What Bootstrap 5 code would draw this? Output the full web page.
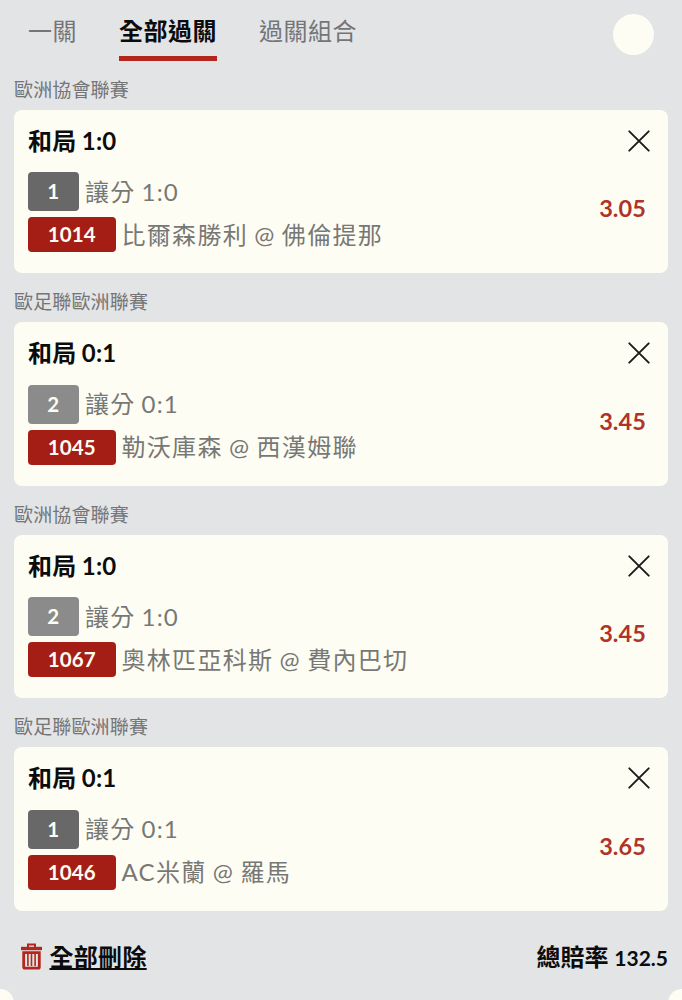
<!DOCTYPE html>
<html lang="zh-Hant">
<head>
    <meta charset="UTF-8">
    <meta name="viewport" content="width=device-width, initial-scale=1.0">
    <title>全部過關</title>

    <!-- Bootstrap CSS -->
    <link rel="stylesheet" href="https://cdn.jsdelivr.net/npm/bootstrap@5.3.0/dist/css/bootstrap.min.css">

    <style>
        body {
            background: #e3e4e6;
            color: #0c0c0c;
            font-family: Lato, "Noto Sans CJK TC", sans-serif;
            font-size: 24px;
            height: 1000px;
            overflow: hidden;
        }
        .bet-tabs { height: 60.5px; gap: 42px; padding-left: 28px; }
        .bet-tabs .nav-link {
            height: 61px;
            padding: 11px 0 0;
            line-height: 40px;
            letter-spacing: .5px;
            color: #747577;
            border-bottom: 5px solid transparent;
        }
        .bet-tabs .nav-link.active { color: #0c0c0c; font-weight: 700; border-bottom-color: #b3261e; }
        .round-btn { width: 41px; height: 41px; margin: 13.5px 28.5px 0 0; background: #fefdf3; }
        .league { height: 49px; padding-top: 8px; line-height: 42px; font-size: 19px; letter-spacing: .15px; color: #747577; }
        .bet-card { height: 163.5px; border-radius: 8px; background: #fefdf3; padding: 0 18px 0 14px; }
        .bet-title { height: 62.5px; line-height: 62px; font-weight: 700; letter-spacing: .2px; word-spacing: -.6px; }
        .bet-lines { gap: 6px; }
        .bet-row { height: 39px; gap: 6.5px; color: #777875; letter-spacing: 1.2px; word-spacing: -1.2px; white-space: pre; }
        .bet-row + .bet-row { height: 35px; gap: 6px; letter-spacing: 1.3px; }
        .bet-row .tag {
            border-radius: 4px;
            color: #fefdf3;
            font-size: 20.5px;
            font-weight: 700;
            letter-spacing: .1px;
            text-align: center;
        }
        .tag-pick { width: 50.5px; height: 39px; line-height: 39px; background: #686868; }
        .tag-pick.second { background: #8b8b8b; }
        .tag-code { width: 87.5px; height: 35px; line-height: 35px; background: #a51e16; }
        .odds { font-weight: 700; font-size: 23.5px; letter-spacing: .1px; color: #b0332a; padding-top: 19px; }
        .bet-footer { height: 90px; padding: 2px 14px 0 20px; font-weight: 700; }
        .bet-footer a { margin-left: 6.5px; color: #0c0c0c; letter-spacing: .3px; text-decoration-thickness: 2px; text-underline-offset: 2px; text-decoration-skip-ink: none; }
        #totalOdds { font-size: 21px; }
        .notch { position: absolute; top: 989px; width: 28px; height: 28px; border-radius: 50%; background: #fefdf3; }
        .notch-left { left: -14px; }
        .notch-right { right: -14px; }
    </style>
</head>
<body class="position-relative">

    <!-- Tabs -->
    <div class="d-flex justify-content-between align-items-start">
        <ul class="nav bet-tabs">
            <li><a class="nav-link" href="#">一關</a></li>
            <li><a class="nav-link active" href="#">全部過關</a></li>
            <li><a class="nav-link" href="#">過關組合</a></li>
        </ul>
        <button class="btn round-btn rounded-circle border-0 p-0" aria-label="選單"></button>
    </div>

    <!-- Selections -->
    <main id="betList"></main>

    <!-- Footer -->
    <footer class="bet-footer d-flex justify-content-between align-items-center">
        <div class="d-flex align-items-center">
            <svg width="23" height="27" viewBox="0 0 23 27" fill="none" stroke="#b3261e">
                <path d="M8 4V1.5h7V4" stroke-width="2"/>
                <path d="M1 5.5h21" stroke-width="3.4"/>
                <path d="M3.7 9.7h15.6V24q0 1.2-1.2 1.2H4.9q-1.2 0-1.2-1.2z" stroke-width="2.8"/>
                <path d="M7.9 11v12M11.5 11v12M15.1 11v12" stroke-width="1.6"/>
            </svg>
            <a href="#" id="removeAll">全部刪除</a>
        </div>
        <div>總賠率 <span id="totalOdds">132.5</span></div>
    </footer>

    <span class="notch notch-left"></span>
    <span class="notch notch-right"></span>

    <script>
        const bets = [
            { league: "歐洲協會聯賽", score: "1:0", pick: 1, code: 1014, teams: "比爾森勝利 @ 佛倫提那", odds: 3.05 },
            { league: "歐足聯歐洲聯賽", score: "0:1", pick: 2, code: 1045, teams: "勒沃庫森 @ 西漢姆聯", odds: 3.45 },
            { league: "歐洲協會聯賽", score: "1:0", pick: 2, code: 1067, teams: "奧林匹亞科斯 @ 費內巴切", odds: 3.45 },
            { league: "歐足聯歐洲聯賽", score: "0:1", pick: 1, code: 1046, teams: "AC米蘭 @ 羅馬", odds: 3.65 },
        ];

        function loadBets() {
            const betList = document.getElementById("betList");
            betList.innerHTML = "";
            bets.forEach(bet => {
                const item = document.createElement("section");
                item.style.padding = "0 14px";
                item.innerHTML = `
                    <div class="league">${bet.league}</div>
                    <div class="bet-card">
                        <div class="bet-title d-flex justify-content-between align-items-center">
                            <span>和局 ${bet.score}</span>
                            <svg width="22" height="22" viewBox="0 0 22 22" stroke="#1a1a1a" stroke-width="1.9" stroke-linecap="round"><path d="M1.3 1.3l19.4 19.4M20.7 1.3L1.3 20.7"/></svg>
                        </div>
                        <div class="d-flex justify-content-between align-items-start">
                            <div class="d-flex flex-column bet-lines">
                                <div class="bet-row d-flex align-items-center"><span class="tag tag-pick${bet.pick === 2 ? " second" : ""}">${bet.pick}</span><span>讓分 ${bet.score}</span></div>
                                <div class="bet-row d-flex align-items-center"><span class="tag tag-code">${bet.code}</span><span>${bet.teams}</span></div>
                            </div>
                            <div class="odds pe-1">${bet.odds.toFixed(2)}</div>
                        </div>
                    </div>
                `;
                betList.appendChild(item);
            });
        }

        window.onload = loadBets;
    </script>

    <!-- Bootstrap JS -->
    <script src="https://cdn.jsdelivr.net/npm/bootstrap@5.3.0/dist/js/bootstrap.bundle.min.js"></script>

</body>
</html>
